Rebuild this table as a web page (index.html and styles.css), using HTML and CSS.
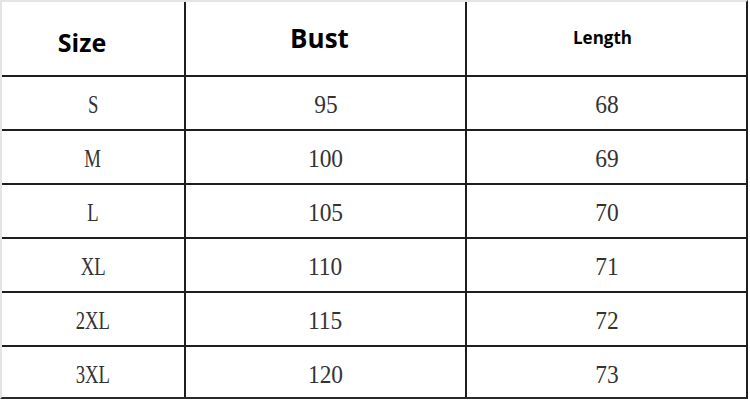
FILE: index.html
```html
<!DOCTYPE html>
<html lang="en">
<head>
<meta charset="utf-8">
<title>Size chart</title>
<link rel="stylesheet" href="styles.css">
</head>
<body>
<div class="chart">
  <div class="cell head head-size">Size</div>
  <div class="cell head head-bust">Bust</div>
  <div class="cell head head-length">Length</div>

  <div class="cell val"><span class="narrow">S</span></div>
  <div class="cell val"><span class="digits">95</span></div>
  <div class="cell val"><span class="digits">68</span></div>

  <div class="cell val"><span class="narrow">M</span></div>
  <div class="cell val"><span class="digits">100</span></div>
  <div class="cell val"><span class="digits">69</span></div>

  <div class="cell val"><span class="narrow">L</span></div>
  <div class="cell val"><span class="digits">105</span></div>
  <div class="cell val"><span class="digits">70</span></div>

  <div class="cell val"><span class="narrow">XL</span></div>
  <div class="cell val"><span class="digits">110</span></div>
  <div class="cell val"><span class="digits">71</span></div>

  <div class="cell val"><span class="narrow">2XL</span></div>
  <div class="cell val"><span class="digits">115</span></div>
  <div class="cell val"><span class="digits">72</span></div>

  <div class="cell val last"><span class="narrow">3XL</span></div>
  <div class="cell val last"><span class="digits">120</span></div>
  <div class="cell val last"><span class="digits">73</span></div>
</div>
</body>
</html>
```

FILE: styles.css
```css
html, body {
  margin: 0;
  padding: 0;
  background: #ffffff;
}

body {
  width: 750px;
  height: 400px;
  overflow: hidden;
}

.chart {
  display: grid;
  grid-template-columns: 182px 279px 279px;
  grid-template-rows: 73px repeat(5, 52px) 50px;
  gap: 2px;
  width: 744px;
  background: #1e1e1e;
  border-top: 2px solid #e4e4e4;
  border-left: 2px solid #e4e4e4;
  border-right: 2px solid #1e1e1e;
  border-bottom: 2px solid #2a2a2a;
}

.cell {
  background: #ffffff;
  display: flex;
  align-items: center;
  justify-content: center;
}

.head {
  font-family: "Open Sans", "Noto Sans", sans-serif;
  font-weight: 700;
  color: #000000;
}

.head-size {
  font-size: 25px;
  padding: 6px 22px 0 0;
}

.head-bust {
  font-size: 26px;
  padding: 0 12px 2px 0;
}

.head-length {
  font-size: 17px;
  padding: 0 8px 2px 0;
}

.val {
  font-family: "Liberation Serif", "Times New Roman", serif;
  font-size: 26px;
  color: #333333;
  padding-top: 4px;
}

.val.last {
  padding-top: 6px;
}

.narrow {
  display: inline-block;
  transform: scaleX(0.72);
}

.digits {
  display: inline-block;
  transform: scaleX(0.9);
}
```
